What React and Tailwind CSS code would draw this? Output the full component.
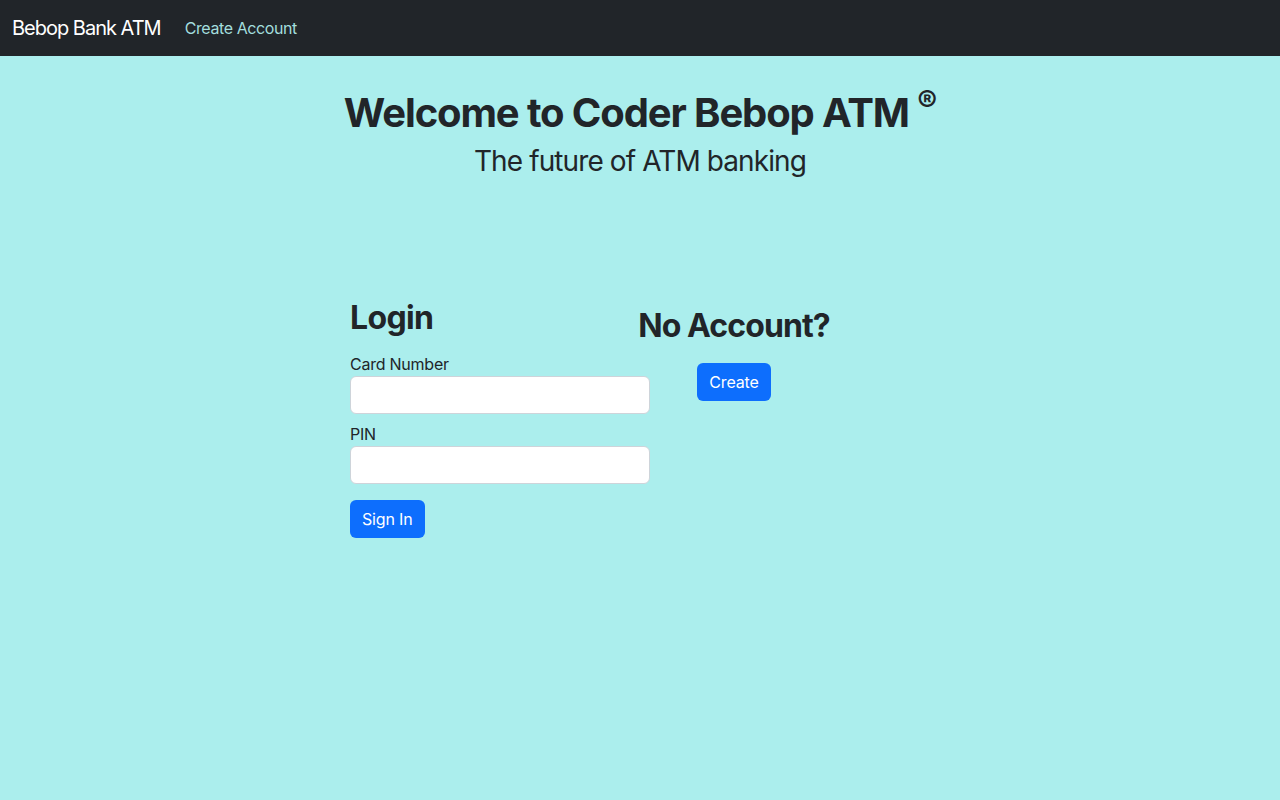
import React from 'react'

const Field = ({ label, type = 'text' }) => (
  <div className="flex flex-col">
    <label className="text-[16px] leading-[24px] tracking-[-0.015em] text-[#212529]">{label}</label>
    <input
      type={type}
      className="h-[38px] w-full rounded-[6px] border border-[#ced4da] bg-white px-3 text-[16px] outline-none"
    />
  </div>
)

const Button = ({ children }) => (
  <button className="h-[38px] rounded-[6px] bg-[#0d6efd] px-[12px] text-[16px] leading-[24px] tracking-[-0.01em] text-white">
    {children}
  </button>
)

export default function App() {
  return (
    <div className="min-h-[800px] bg-[#abeeed] font-['Inter',sans-serif] text-[#212529]">
      <nav className="flex h-[56px] items-center bg-[#212529] px-[12px]">
        <span className="text-[20px] leading-[30px] tracking-[-0.05em] text-white">Bebop Bank ATM</span>
        <a className="ml-[24px] text-[16px] tracking-[-0.025em] text-[#a3dedd]" href="#">Create Account</a>
      </nav>

      <header className="pt-[33px] text-center">
        <h1 className="text-[40px] font-bold leading-[48px] tracking-[-0.028em]">
          Welcome to Coder Bebop ATM <sup className="text-[30px] font-bold">®</sup>
        </h1>
        <h3 className="mt-[7px] text-[28px] font-normal leading-[34px] tracking-[-0.032em]">The future of ATM banking</h3>
      </header>

      <div className="mt-[121px] flex">
        <div className="ml-[350px] flex w-[300px] flex-col">
          <h2 className="text-[32px] font-bold leading-[38px] tracking-[-0.02em]">Login</h2>
          <div className="mt-[15px] flex flex-col gap-[8px]">
            <Field label="Card Number" />
            <Field label="PIN" type="password" />
          </div>
          <div className="mt-[16px]">
            <Button>Sign In</Button>
          </div>
        </div>
        <div className="flex w-[168px] flex-col items-center pt-[8px]">
          <h2 className="whitespace-nowrap text-[32px] font-bold leading-[38px] tracking-[-0.028em]">No Account?</h2>
          <div className="mt-[18px]">
            <Button>Create</Button>
          </div>
        </div>
      </div>
    </div>
  )
}
